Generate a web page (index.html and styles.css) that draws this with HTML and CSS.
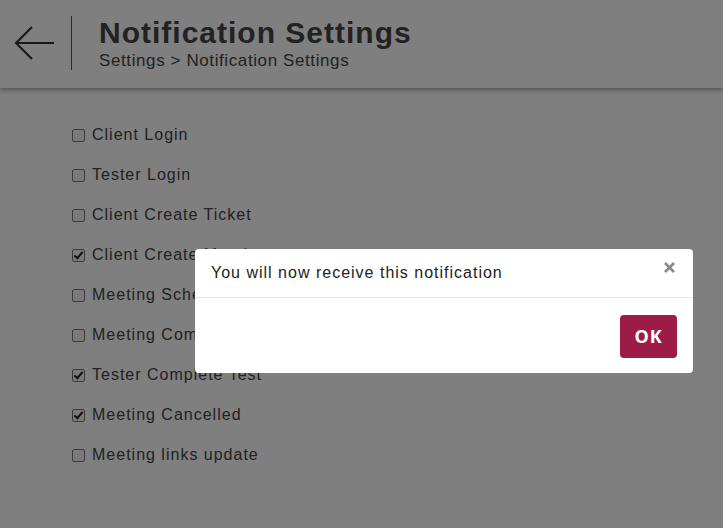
FILE: index.html
```html
<!DOCTYPE html>
<html>
<head>
<meta charset="utf-8">
<link rel="stylesheet" href="styles.css">
</head>
<body>
<header class="topbar">
  <button class="back" aria-label="Back">
    <svg width="44" height="40" viewBox="0 0 44 40"><path d="M42 20H4M20 4L4 20L20 36" fill="none" stroke="#333" stroke-width="2.2"/></svg>
  </button>
  <div class="divider"></div>
  <div class="titles">
    <h1 class="title">Notification Settings</h1>
    <div class="crumb">Settings &gt; Notification Settings</div>
  </div>
</header>
<main class="list">
  <label class="row"><span class="box"></span>Client Login</label>
  <label class="row"><span class="box"></span>Tester Login</label>
  <label class="row"><span class="box"></span>Client Create Ticket</label>
  <label class="row"><span class="box on"></span>Client Create Meeting</label>
  <label class="row"><span class="box"></span>Meeting Scheduled</label>
  <label class="row"><span class="box"></span>Meeting Completed</label>
  <label class="row"><span class="box on"></span>Tester Complete Test</label>
  <label class="row"><span class="box on"></span>Meeting Cancelled</label>
  <label class="row"><span class="box"></span>Meeting links update</label>
</main>
<div class="overlay"></div>
<div class="modal">
  <div class="modal-head">
    <span class="msg">You will now receive this notification</span>
    <svg class="close" width="11" height="11" viewBox="0 0 11 11"><path d="M1 1L10 10M10 1L1 10" stroke="#888" stroke-width="2.6"/></svg>
  </div>
  <div class="modal-foot">
    <button class="ok">OK</button>
  </div>
</div>
</body>
</html>
```
FILE: styles.css
```css
html, body { margin: 0; padding: 0; }
body {
  width: 723px; height: 528px; overflow: hidden;
  background: #fff;
  font-family: "Liberation Sans", Arial, sans-serif;
  color: #555;
  position: relative;
}
.topbar {
  height: 88px;
  background: #fff;
  box-shadow: 0 2px 5px rgba(0,0,0,0.35);
  display: flex;
  align-items: center;
  box-sizing: border-box;
  padding: 0 0 2px 12px;
  position: relative;
  z-index: 1;
}
.back { background: none; border: 0; padding: 0; width: 44px; height: 40px; display: block; }
.back svg { display: block; }
.divider { width: 1px; height: 54px; background: #555; margin: 0 27px 0 15px; }
.titles { display: flex; flex-direction: column; }
.title { margin: 0; font-size: 30px; font-weight: bold; color: #444; letter-spacing: 1px; line-height: 32px; }
.crumb { font-size: 17px; color: #444; letter-spacing: 0.6px; line-height: 20px; margin-top: 2px; margin-bottom: -2px; }
.list { padding: 27px 0 0 72px; display: flex; flex-direction: column; }
.row { height: 40px; display: flex; align-items: center; font-size: 16px; letter-spacing: 1px; color: #444; }
.box { width: 11px; height: 11px; border: 1px solid #777; border-radius: 2px; background: #f4f4f4; margin-right: 7px; position: relative; box-sizing: content-box; }
.box.on::after { content: ""; position: absolute; left: 3px; top: 0px; width: 3px; height: 7px; border: solid #222; border-width: 0 2px 2px 0; transform: rotate(40deg); }
.overlay { position: absolute; inset: 0; background: rgba(0,0,0,0.5); z-index: 2; }
.modal { position: absolute; left: 195px; top: 249px; width: 498px; height: 124px; background: #fff; border-radius: 4px; z-index: 3; display: flex; flex-direction: column; box-sizing: border-box; }
.modal-head { height: 49px; border-bottom: 1px solid #e6e6e6; display: flex; align-items: center; justify-content: space-between; padding: 0 18px 0 16px; box-sizing: border-box; }
.msg { font-size: 16px; color: #222; letter-spacing: 1px; margin-top: 0; }
.close { display: block; margin-top: -12px; }
.modal-foot { flex: 1; display: flex; justify-content: flex-end; align-items: center; padding-right: 16px; }
.ok { width: 57px; height: 43px; background: #9c1c45; color: #fff; border: 0; border-radius: 4px; font-family: "Open Sans", "Liberation Sans", sans-serif; font-weight: bold; font-size: 18px; letter-spacing: 0.8px; margin-top: 1px; }
```
